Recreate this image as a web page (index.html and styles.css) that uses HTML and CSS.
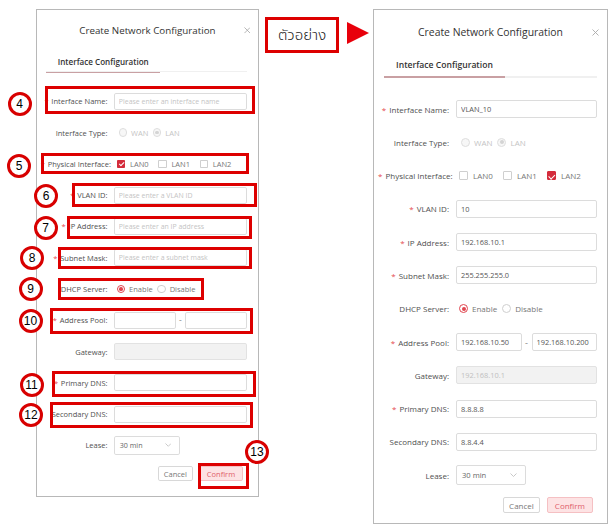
FILE: index.html
```html
<!DOCTYPE html>
<html lang="en">
<head>
<meta charset="utf-8">
<title>Create Network Configuration</title>
<link rel="stylesheet" href="styles.css">
</head>
<body>
<main class="sheet">
  <section class="stage">
    <div class="dialog dialog--small">
      <header class="dlg-head">
        <h1 class="dlg-title">Create Network Configuration</h1>
        <svg class="dlg-close" viewBox="0 0 7 7"><path d="M0.5 0.5L6.5 6.5M6.5 0.5L0.5 6.5"/></svg>
      </header>
      <nav class="tabs"><span class="tab">Interface Configuration</span></nav>
      <form class="form">
        <div class="row"><label class="lbl req">Interface Name:</label><input class="inp" placeholder="Please enter an interface name"></div>
        <div class="row"><label class="lbl">Interface Type:</label>
          <div class="opts opts--type"><span class="opt opt--radio dis"><i class="rd rd--dis"></i>WAN</span><span class="opt opt--radio dis"><i class="rd rd--dis rd--on"></i>LAN</span></div></div>
        <div class="row"><label class="lbl req">Physical Interface:</label>
          <div class="opts"><span class="opt"><i class="cb cb--on"></i>LAN0</span><span class="opt"><i class="cb"></i>LAN1</span><span class="opt"><i class="cb"></i>LAN2</span></div></div>
        <div class="row"><label class="lbl req">VLAN ID:</label><input class="inp" placeholder="Please enter a VLAN ID"></div>
        <div class="row"><label class="lbl req">IP Address:</label><input class="inp" placeholder="Please enter an IP address"></div>
        <div class="row"><label class="lbl req">Subnet Mask:</label><input class="inp" placeholder="Please enter a subnet mask"></div>
        <div class="row"><label class="lbl">DHCP Server:</label>
          <div class="opts"><span class="opt opt--radio"><i class="rd rd--on"></i>Enable</span><span class="opt opt--radio"><i class="rd"></i>Disable</span></div></div>
        <div class="row"><label class="lbl req">Address Pool:</label>
          <div class="pool"><input class="inp"><span class="dash">-</span><input class="inp"></div></div>
        <div class="row"><label class="lbl">Gateway:</label><input class="inp" disabled></div>
        <div class="row"><label class="lbl req">Primary DNS:</label><input class="inp"></div>
        <div class="row"><label class="lbl">Secondary DNS:</label><input class="inp"></div>
        <div class="row"><label class="lbl">Lease:</label>
          <div class="sel"><span>30 min</span><svg class="chev" viewBox="0 0 7 4"><path d="M0.5 0.5L3.5 3.5L6.5 0.5"/></svg></div></div>
      </form>
      <footer class="dlg-foot"><button class="btn" type="button">Cancel</button><button class="btn btn--primary" type="button">Confirm</button></footer>
    </div>

    <div class="mark mark-4"></div>
    <div class="mark mark-5"></div>
    <div class="mark mark-6"></div>
    <div class="mark mark-7"></div>
    <div class="mark mark-8"></div>
    <div class="mark mark-9"></div>
    <div class="mark mark-10"></div>
    <div class="mark mark-11"></div>
    <div class="mark mark-12"></div>
    <div class="mark mark-13"></div>

    <span class="num num-4">4</span>
    <span class="num num-5">5</span>
    <span class="num num-6">6</span>
    <span class="num num-7">7</span>
    <span class="num num-8">8</span>
    <span class="num num-9">9</span>
    <span class="num num-10">10</span>
    <span class="num num-11">11</span>
    <span class="num num-12">12</span>
    <span class="num num-13">13</span>
  </section>

  <div class="callout">
    <div class="callout-label">ตัวอย่าง</div>
    <div class="callout-arrow"></div>
  </div>

  <div class="dialog dialog--main">
    <header class="dlg-head">
      <h1 class="dlg-title">Create Network Configuration</h1>
      <svg class="dlg-close" viewBox="0 0 7 7"><path d="M0.5 0.5L6.5 6.5M6.5 0.5L0.5 6.5"/></svg>
    </header>
    <nav class="tabs"><span class="tab">Interface Configuration</span></nav>
    <form class="form">
      <div class="row"><label class="lbl req">Interface Name:</label><input class="inp" value="VLAN_10"></div>
      <div class="row"><label class="lbl">Interface Type:</label>
        <div class="opts opts--type"><span class="opt opt--radio dis"><i class="rd rd--dis"></i>WAN</span><span class="opt opt--radio dis"><i class="rd rd--dis rd--on"></i>LAN</span></div></div>
      <div class="row"><label class="lbl req">Physical Interface:</label>
        <div class="opts"><span class="opt"><i class="cb"></i>LAN0</span><span class="opt"><i class="cb"></i>LAN1</span><span class="opt"><i class="cb cb--on"></i>LAN2</span></div></div>
      <div class="row"><label class="lbl req">VLAN ID:</label><input class="inp" value="10"></div>
      <div class="row"><label class="lbl req">IP Address:</label><input class="inp" value="192.168.10.1"></div>
      <div class="row"><label class="lbl req">Subnet Mask:</label><input class="inp" value="255.255.255.0"></div>
      <div class="row"><label class="lbl">DHCP Server:</label>
        <div class="opts"><span class="opt opt--radio"><i class="rd rd--on"></i>Enable</span><span class="opt opt--radio"><i class="rd"></i>Disable</span></div></div>
      <div class="row"><label class="lbl req">Address Pool:</label>
        <div class="pool"><input class="inp" value="192.168.10.50"><span class="dash">-</span><input class="inp" value="192.168.10.200"></div></div>
      <div class="row"><label class="lbl">Gateway:</label><input class="inp" disabled value="192.168.10.1"></div>
      <div class="row"><label class="lbl req">Primary DNS:</label><input class="inp" value="8.8.8.8"></div>
      <div class="row"><label class="lbl">Secondary DNS:</label><input class="inp" value="8.8.4.4"></div>
      <div class="row"><label class="lbl">Lease:</label>
        <div class="sel"><span>30 min</span><svg class="chev" viewBox="0 0 7 4"><path d="M0.5 0.5L3.5 3.5L6.5 0.5"/></svg></div></div>
    </form>
    <footer class="dlg-foot"><button class="btn" type="button">Cancel</button><button class="btn btn--primary" type="button">Confirm</button></footer>
  </div>
</main>
</body>
</html>
```

FILE: styles.css
```css
* { box-sizing: border-box; margin: 0; padding: 0; }
html, body { background: #fff; }
body { font-family: "Open Sans", "Liberation Sans", sans-serif; color: #333; }

.sheet {
  display: flex;
  align-items: flex-start;
  width: 612px;
  height: 532px;
  overflow: hidden;
}

/* left annotated stage */
.stage {
  position: relative;
  flex: none;
  width: 262px;
  padding: 9px 0 0 36px;
}

/* middle callout */
.callout {
  flex: none;
  display: flex;
  align-items: flex-start;
  margin: 17px 0 0 3px;
}
.callout-label {
  width: 74px;
  height: 36px;
  border: 3px solid #dd0000;
  display: flex;
  align-items: center;
  justify-content: center;
  font-family: "Noto Sans Thai", "Tahoma", "DejaVu Sans", sans-serif;
  font-size: 15px;
  font-weight: 300;
  color: #222;
}
.callout-arrow {
  margin: 5px 0 0 8px;
  width: 0;
  height: 0;
  border-top: 11.5px solid transparent;
  border-bottom: 11.5px solid transparent;
  border-left: 22px solid #e8000b;
}

/* dialog */
.dialog {
  flex: none;
  width: 235px;
  height: 515px;
  border: 1px solid #b8b8b8;
  background: #fff;
  display: flex;
  flex-direction: column;
}
.dialog--main { margin: 9px 0 0 4px; }
.dialog--small { zoom: 0.94; width: 237px; height: 519px; }
.dialog--small .form { padding-right: 12px; }
.dialog--small .tabs { margin-right: 12px; }
.dialog--small .dlg-foot { padding-right: 16px; }

.dlg-head {
  display: grid;
  grid-template-columns: 1fr auto 1fr;
  align-items: center;
  padding: 14px 8px 0;
}
.dlg-title {
  grid-column: 2;
  font-size: 10.4px;
  font-weight: 400;
  line-height: 16px;
  color: #333;
  white-space: nowrap;
}
.dlg-close {
  grid-column: 3;
  justify-self: end;
  width: 7px;
  height: 7px;
  display: block;
}
.dlg-close path { stroke: #aaa; stroke-width: 0.9; fill: none; }

.tabs {
  display: flex;
  margin: 18px 10px 0 10px;
  border-bottom: 2px solid #f0f0f0;
}
.tab {
  width: 121px;
  text-align: center;
  font-size: 8.6px;
  font-weight: 600;
  line-height: 14px;
  padding-bottom: 4px;
  margin-bottom: -2px;
  border-bottom: 2px solid #c9a0a3;
  color: #333;
  white-space: nowrap;
}

.form {
  display: flex;
  flex-direction: column;
  gap: 15.3px;
  margin-top: 22px;
  padding: 0 10px 0 4px;
}
.row {
  display: flex;
  align-items: center;
  height: 18px;
}
.lbl {
  flex: none;
  width: 71px;
  margin-right: 7px;
  text-align: right;
  font-size: 8px;
  color: #4f4f4f;
  white-space: nowrap;
}
.req::before {
  content: "*";
  color: #e5484d;
  margin-right: 3px;
}

.inp {
  flex: 1 1 0;
  width: 0;
  min-width: 0;
  height: 18px;
  border: 1px solid #dcdcdc;
  border-radius: 2px;
  padding: 0 4px;
  font-family: inherit;
  font-size: 7.4px;
  color: #555;
  background: #fff;
  outline: none;
}
.inp::placeholder { color: #c4c4c4; }
.inp:disabled { background: #f2f2f2; border-color: #e2e2e2; color: #c0c0c0; }

.pool { flex: 1 1 0; min-width: 0; display: flex; align-items: center; gap: 3px; }
.dash { flex: none; width: 4px; text-align: center; font-size: 9px; line-height: 9px; color: #888; }

.opts { display: flex; align-items: center; padding-left: 3px; }
.opts--type { padding-left: 5px; }
.opt {
  display: flex;
  align-items: center;
  gap: 5px;
  width: 44px;
  font-size: 8px;
  color: #777;
}
.opt--radio { width: auto; gap: 4px; margin-right: 5px; }
.opt.dis { color: #c4c4c4; }

.cb {
  position: relative;
  flex: none;
  width: 9px;
  height: 9px;
  border: 1px solid #cfcfcf;
  border-radius: 1px;
  background: #fff;
}
.cb--on { background: #d42c3c; border-color: #d42c3c; }
.cb--on::after {
  content: "";
  position: absolute;
  left: 2.3px;
  top: 0.6px;
  width: 2.5px;
  height: 4.6px;
  border: solid #fff;
  border-width: 0 1px 1px 0;
  transform: rotate(45deg);
}

.rd {
  flex: none;
  width: 9px;
  height: 9px;
  border: 1px solid #cfcfcf;
  border-radius: 50%;
  background: #fff;
  display: flex;
  align-items: center;
  justify-content: center;
}
.rd--on { border-color: #e0454f; }
.rd--on::before {
  content: "";
  width: 4px;
  height: 4px;
  border-radius: 50%;
  background: #e0454f;
}
.rd--dis { border-color: #dedede; background: #f7f7f7; }
.rd--dis.rd--on::before { background: #d4d4d4; }

.sel {
  width: 70px;
  height: 20px;
  border: 1px solid #dcdcdc;
  border-radius: 2px;
  display: flex;
  align-items: center;
  justify-content: space-between;
  padding: 0 8px 0 5px;
  font-size: 7.6px;
  color: #666;
}
.chev { width: 7px; height: 4px; display: block; }
.chev path { stroke: #bbb; stroke-width: 0.8; fill: none; }

.dlg-foot {
  display: flex;
  justify-content: flex-end;
  gap: 7px;
  margin-top: 13px;
  padding-right: 14px;
}
.btn {
  height: 16px;
  padding: 0 5px;
  border: 1px solid #d8d8d8;
  border-radius: 2px;
  background: #fff;
  font-family: inherit;
  font-size: 8px;
  color: #777;
}
.btn--primary {
  padding: 0 7px;
  background: #fde3e4;
  border-color: #f5c0c3;
  color: #e0606a;
}

/* annotations over the left dialog */
.mark {
  position: absolute;
  border: 3px solid #dd0000;
}
.mark-4  { left: 45px;  top: 86px;  width: 210px; height: 28px; }
.mark-5  { left: 41px;  top: 153px; width: 208px; height: 21px; }
.mark-6  { left: 72px;  top: 183px; width: 185px; height: 24px; }
.mark-7  { left: 67px;  top: 216px; width: 185px; height: 23px; }
.mark-8  { left: 58px;  top: 247px; width: 194px; height: 22px; }
.mark-9  { left: 58px;  top: 278px; width: 146px; height: 22px; }
.mark-10 { left: 50px;  top: 308px; width: 203px; height: 26px; }
.mark-11 { left: 52px;  top: 371px; width: 204px; height: 26px; }
.mark-12 { left: 50px;  top: 402px; width: 203px; height: 26px; }
.mark-13 { left: 198px; top: 463px; width: 51px;  height: 26px; }

.num {
  position: absolute;
  width: 24px;
  height: 24px;
  border: 3px solid #d80000;
  border-radius: 50%;
  background: #fff;
  display: flex;
  align-items: center;
  justify-content: center;
  font-family: "Liberation Sans", sans-serif;
  font-size: 12px;
  color: #000;
}
.num-4  { left: 7.5px;  top: 91.5px; }
.num-5  { left: 7px;    top: 154px; }
.num-6  { left: 34px;   top: 184px; }
.num-7  { left: 33.5px; top: 215.5px; }
.num-8  { left: 20px;   top: 246px; }
.num-9  { left: 18.5px; top: 277px; }
.num-10 { left: 18.5px; top: 308.5px; }
.num-11 { left: 19.5px; top: 373px; }
.num-12 { left: 19px;   top: 403px; }
.num-13 { left: 245px;  top: 440px; }
```
